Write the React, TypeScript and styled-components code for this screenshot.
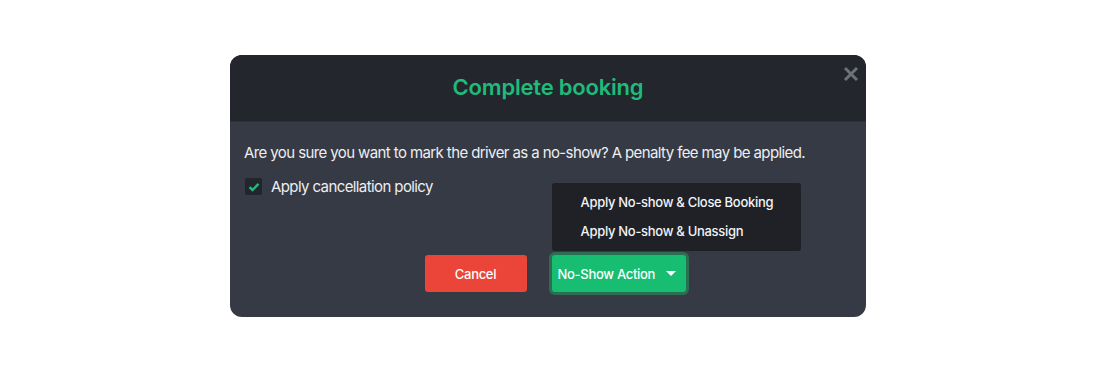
import React from "react";
import styled, { createGlobalStyle } from "styled-components";

const GlobalStyle = createGlobalStyle`
  html, body {
    margin: 0;
    padding: 0;
    background: #ffffff;
    font-family: Inter, "Noto Sans", "Liberation Sans", sans-serif;
  }
`;

const Page = styled.div`
  width: 1098px;
  height: 372px;
  display: flex;
  justify-content: center;
  align-items: flex-start;
  padding-top: 55px;
  box-sizing: border-box;
`;

const Modal = styled.div`
  width: 636px;
  height: 262px;
  margin-right: 2px;
  border-radius: 12px;
  background: #363a44;
  display: flex;
  flex-direction: column;
  position: relative;
`;

const Header = styled.div`
  height: 66px;
  background: #23262d;
  border-radius: 12px 12px 0 0;
  border-bottom: 1px solid #2e3139;
  display: flex;
  align-items: center;
  justify-content: center;
  position: relative;
`;

const Title = styled.h2`
  margin: 0;
  font-size: 22px;
  font-weight: 600;
  color: #1ebb7a;
  letter-spacing: -0.2px;
  transform: translateY(-1px);
`;

const CloseButton = styled.button`
  position: absolute;
  top: 9px;
  right: 5px;
  width: 20px;
  height: 20px;
  padding: 0;
  border: none;
  background: transparent;
  cursor: pointer;
  display: flex;
  align-items: center;
  justify-content: center;
`;

const Body = styled.div`
  flex: 1;
  padding: 21px 14px 0 14px;
  display: flex;
  flex-direction: column;
`;

const Message = styled.p`
  margin: 0;
  font-size: 15px;
  line-height: 20px;
  color: #eceef1;
  letter-spacing: -0.6px;
`;

const CheckRow = styled.label`
  display: flex;
  align-items: center;
  gap: 9px;
  margin-top: 14px;
  margin-left: 1px;
  font-size: 15px;
  color: #eceef1;
  letter-spacing: -0.6px;
`;

const CheckBox = styled.span`
  width: 17px;
  height: 17px;
  border-radius: 2px;
  background: #22252b;
  display: flex;
  align-items: center;
  justify-content: center;
`;

const Footer = styled.div`
  display: flex;
  justify-content: center;
  align-items: center;
  gap: 25px;
  margin-top: 59px;
  padding-left: 14px;
`;

const Button = styled.button<{ $variant: "danger" | "success" }>`
  height: 37px;
  border: none;
  border-radius: 3px;
  font-family: inherit;
  font-size: 13px;
  font-weight: 500;
  letter-spacing: -0.3px;
  white-space: nowrap;
  color: #ffffff;
  cursor: pointer;
  display: flex;
  align-items: center;
  justify-content: ${(p) => (p.$variant === "danger" ? "center" : "flex-start")};
  gap: 11px;
  padding: ${(p) => (p.$variant === "danger" ? "0" : "0 0 0 6px")};
  width: ${(p) => (p.$variant === "danger" ? "102px" : "134px")};
  background: ${(p) => (p.$variant === "danger" ? "#ea4538" : "#17bd70")};
  box-shadow: ${(p) =>
    p.$variant === "success" ? "0 0 0 3px #2c6e52" : "none"};
`;

const Caret = styled.span`
  width: 0;
  height: 0;
  border-left: 5px solid transparent;
  border-right: 5px solid transparent;
  border-top: 5px solid #ffffff;
`;

const DropdownWrap = styled.div`
  position: relative;
`;

const Menu = styled.ul`
  position: absolute;
  left: 0;
  bottom: 41px;
  width: 249px;
  margin: 0;
  padding: 5px 0;
  list-style: none;
  background: #1f2127;
  border-radius: 3px;
  box-sizing: border-box;
`;

const MenuItem = styled.li`
  padding: 0 29px;
  height: 29px;
  line-height: 29px;
  font-size: 13px;
  font-weight: 500;
  letter-spacing: -0.3px;
  color: #f2f3f5;
  white-space: nowrap;
  cursor: pointer;
`;

export default function App() {
  return (
    <Page>
      <GlobalStyle />
      <Modal>
        <Header>
          <Title>Complete booking</Title>
          <CloseButton aria-label="Close">
            <svg width="16" height="16" viewBox="0 0 16 16">
              <path
                d="M2 2 L14 14 M14 2 L2 14"
                stroke="#6d717a"
                strokeWidth="3"
                strokeLinecap="butt"
              />
            </svg>
          </CloseButton>
        </Header>
        <Body>
          <Message>
            Are you sure you want to mark the driver as a no-show? A penalty fee may be applied.
          </Message>
          <CheckRow>
            <CheckBox>
              <svg width="12" height="10" viewBox="0 0 12 10">
                <path
                  d="M1.5 5.2 L4.5 8 L10.5 1.8"
                  stroke="#1ebb7a"
                  strokeWidth="2.4"
                  fill="none"
                />
              </svg>
            </CheckBox>
            Apply cancellation policy
          </CheckRow>
          <Footer>
            <Button $variant="danger">Cancel</Button>
            <DropdownWrap>
              <Menu>
                <MenuItem>Apply No-show &amp; Close Booking</MenuItem>
                <MenuItem>Apply No-show &amp; Unassign</MenuItem>
              </Menu>
              <Button $variant="success">
                No-Show Action
                <Caret />
              </Button>
            </DropdownWrap>
          </Footer>
        </Body>
      </Modal>
    </Page>
  );
}
